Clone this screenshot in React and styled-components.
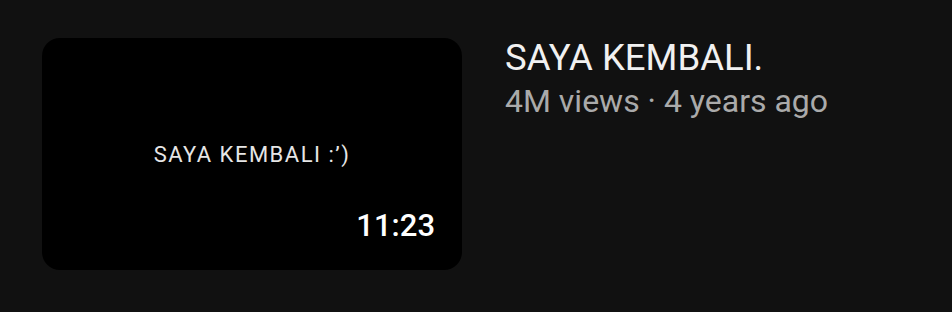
import React from 'react';
import styled, { createGlobalStyle } from 'styled-components';

const GlobalStyle = createGlobalStyle`
  html, body {
    margin: 0;
    padding: 0;
    background: #111111;
  }
  body {
    font-family: Roboto, "Liberation Sans", sans-serif;
  }
`;

const video = {
  title: 'SAYA KEMBALI.',
  views: '4M views',
  age: '4 years ago',
  duration: '11:23',
  caption: 'SAYA KEMBALI :’)',
};

const App = () => {
  return (
    <>
      <GlobalStyle />
      <Row>
        <Thumbnail>
          <Caption>{video.caption}</Caption>
          <Duration>{video.duration}</Duration>
        </Thumbnail>
        <Info>
          <Title>{video.title}</Title>
          <Meta>{video.views} · {video.age}</Meta>
        </Info>
      </Row>
    </>
  );
};

export default App;

const Row = styled.div`
  display: flex;
  align-items: flex-start;
  gap: 43px;
  padding: 38px 42px;
  height: 312px;
  box-sizing: border-box;
`;

const Thumbnail = styled.div`
  position: relative;
  flex: 0 0 420px;
  height: 232px;
  border-radius: 18px;
  background: #000;
  display: flex;
  align-items: center;
  justify-content: center;
`;

const Caption = styled.span`
  color: #e6e6e6;
  font-size: 22px;
  letter-spacing: 1.5px;
`;

const Duration = styled.span`
  position: absolute;
  right: 27px;
  bottom: 26px;
  color: #fff;
  font-size: 31px;
  font-weight: 500;
`;

const Info = styled.div`
  display: flex;
  flex-direction: column;
`;

const Title = styled.h3`
  margin: 0;
  color: #f1f1f1;
  font-size: 36.5px;
  font-weight: 400;
  line-height: 40px;
`;

const Meta = styled.p`
  margin: 3px 0 0;
  color: #aaaaaa;
  font-size: 32px;
  line-height: 40px;
`;
